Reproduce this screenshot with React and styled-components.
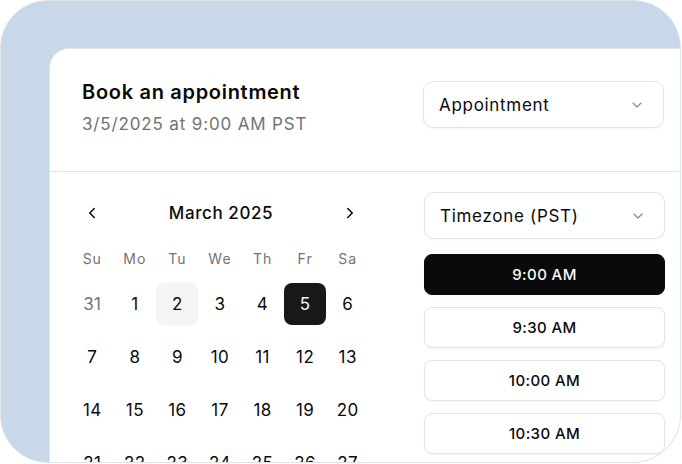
import styled, { createGlobalStyle } from "styled-components";
import { ChevronDown, ChevronLeft, ChevronRight } from "lucide-react";

const GlobalStyle = createGlobalStyle`
    html, body {
        margin: 0;
        padding: 0;
        background: #ffffff;
    }
    body {
        font-family: Inter, "Liberation Sans", sans-serif;
        color: #0a0a0a;
    }
`;

// frame + card
const Frame = styled.div`
    box-sizing: border-box;
    width: 681px;
    height: 463px;
    padding: 47px 0 0 48px;
    background: #c8d8e8;
    border: 1px solid #dde3ea;
    border-radius: 48px;
    overflow: hidden;
`;

const Card = styled.div`
    box-sizing: border-box;
    width: 648px;
    height: 480px;
    background: #fff;
    border: 1px solid #e4e4e7;
    border-radius: 20px;
`;

// header
const Header = styled.div`
    box-sizing: border-box;
    height: 123px;
    display: flex;
    justify-content: space-between;
    align-items: flex-start;
    padding: 31px 32px 0 32px;
    border-bottom: 1px solid #e4e4e7;
`;

const Title = styled.h1`
    margin: 0;
    font-size: 20px;
    line-height: 24px;
    font-weight: 600;
    letter-spacing: 0.7px;
`;

const Subtitle = styled.p`
    margin: 8px 0 0;
    font-size: 17px;
    line-height: 24px;
    letter-spacing: 0.85px;
    color: #737373;
`;

const Select = styled.div`
    box-sizing: border-box;
    width: 241px;
    height: 47px;
    margin-top: ${(p) => p.$offset || 0}px;
    margin-bottom: ${(p) => p.$below || 0}px;
    display: flex;
    align-items: center;
    justify-content: space-between;
    padding: 0 18px 0 15px;
    border: 1px solid #e4e4e7;
    border-radius: 10px;
    background: #fff;
    box-shadow: 0 1px 2px rgba(0, 0, 0, 0.04);
    font-size: 17px;
    letter-spacing: 0.7px;
    color: #0a0a0a;
`;

// body
const Body = styled.div`
    display: flex;
    gap: 55px;
    padding: 20px 0 0 21px;
`;

const Calendar = styled.div`
    width: 298px;
`;

const Nav = styled.div`
    height: 41px;
    display: flex;
    align-items: center;
    justify-content: space-between;
    padding: 0 10px 0 12px;
`;

const NavButton = styled.button`
    display: flex;
    align-items: center;
    justify-content: center;
    padding: 0;
    border: 0;
    background: none;
    color: #0a0a0a;
    cursor: pointer;
`;

const Month = styled.div`
    font-size: 17px;
    font-weight: 500;
    letter-spacing: 0.6px;
`;

const Grid = styled.div`
    display: grid;
    grid-template-columns: repeat(7, 1fr);
    row-gap: 11px;
`;

const WeekDay = styled.div`
    height: 20px;
    margin: 15px 0 4px;
    display: flex;
    align-items: center;
    justify-content: center;
    font-size: 14px;
    letter-spacing: 1px;
    color: #737373;
`;

const Day = styled.div`
    box-sizing: border-box;
    width: 42px;
    height: 42px;
    justify-self: center;
    display: flex;
    align-items: center;
    justify-content: center;
    border-radius: 8px;
    font-size: 17px;
    letter-spacing: 0.4px;
    color: ${(p) => (p.$selected ? "#fafafa" : p.$outside ? "#737373" : "#0a0a0a")};
    background: ${(p) => (p.$selected ? "#18181b" : p.$today ? "#f4f4f5" : "transparent")};
`;

const Times = styled.div`
    width: 241px;
    display: flex;
    flex-direction: column;
    gap: 12px;
`;

const Slot = styled.div`
    box-sizing: border-box;
    height: 41px;
    display: flex;
    align-items: center;
    justify-content: center;
    border-radius: 8px;
    border: 1px solid ${(p) => (p.$active ? "#0a0a0a" : "#e4e4e7")};
    background: ${(p) => (p.$active ? "#0a0a0a" : "#fff")};
    color: ${(p) => (p.$active ? "#fafafa" : "#0a0a0a")};
    font-size: 15px;
    font-weight: 500;
    letter-spacing: 0.4px;
    box-shadow: 0 1px 2px rgba(0, 0, 0, 0.04);
`;

const weekDays = ["Su", "Mo", "Tu", "We", "Th", "Fr", "Sa"];
const days = [31, ...Array.from({ length: 27 }, (_, i) => i + 1)];
const times = ["9:00 AM", "9:30 AM", "10:00 AM", "10:30 AM"];

export default function App() {
    return (
        <>
            <GlobalStyle />
            <Frame>
                <Card>
                    {/* HEADER */}
                    <Header>
                        <div>
                            <Title>Book an appointment</Title>
                            <Subtitle>3/5/2025 at 9:00 AM PST</Subtitle>
                        </div>
                        <Select $offset={1}>
                            Appointment
                            <ChevronDown size={16} color="#8a8a8a" strokeWidth={1.75} />
                        </Select>
                    </Header>
                    {/* BODY */}
                    <Body>
                        <Calendar>
                            <Nav>
                                <NavButton>
                                    <ChevronLeft size={18} strokeWidth={2} />
                                </NavButton>
                                <Month>March 2025</Month>
                                <NavButton>
                                    <ChevronRight size={18} strokeWidth={2} />
                                </NavButton>
                            </Nav>
                            <Grid>
                                {weekDays.map((d) => (
                                    <WeekDay key={d}>{d}</WeekDay>
                                ))}
                                {days.map((d, i) => (
                                    <Day
                                        key={i}
                                        $outside={i === 0}
                                        $today={i === 2}
                                        $selected={i === 5}
                                    >
                                        {d}
                                    </Day>
                                ))}
                            </Grid>
                        </Calendar>
                        <Times>
                            <Select $below={3}>
                                Timezone (PST)
                                <ChevronDown size={16} color="#8a8a8a" strokeWidth={1.75} />
                            </Select>
                            {times.map((t, i) => (
                                <Slot key={t} $active={i === 0}>
                                    {t}
                                </Slot>
                            ))}
                        </Times>
                    </Body>
                </Card>
            </Frame>
        </>
    );
}
